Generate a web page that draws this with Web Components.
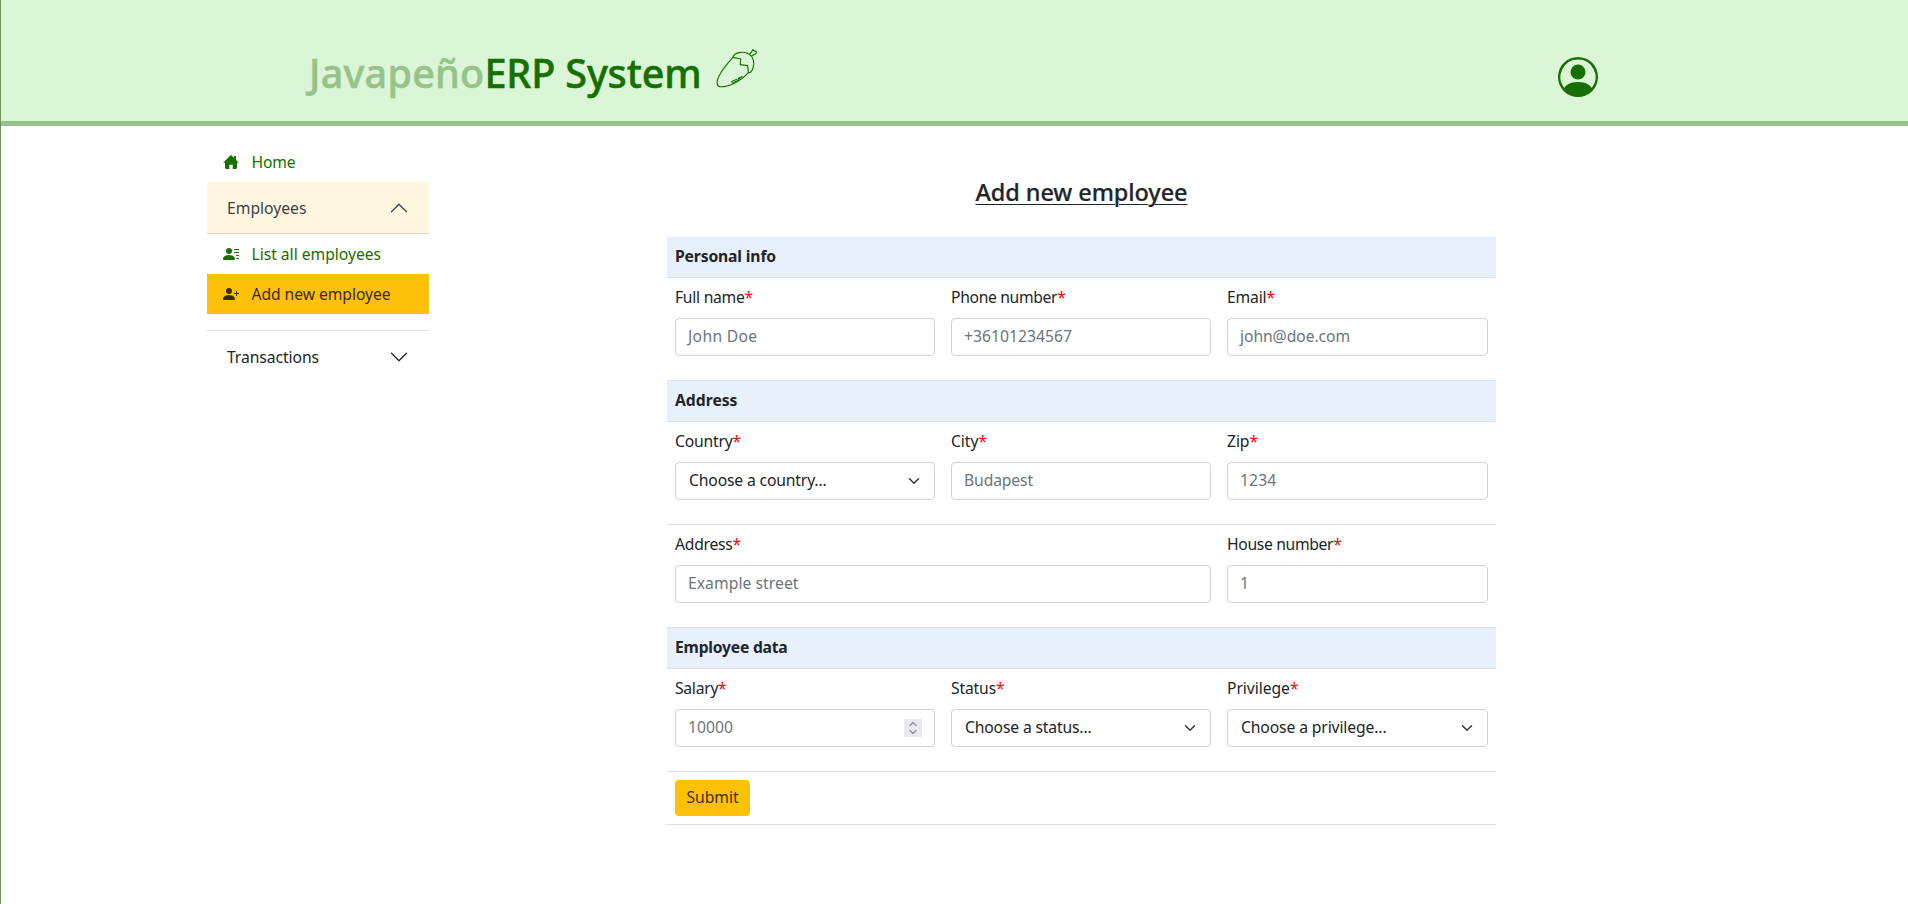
<!DOCTYPE html>
<html lang="en"><head><meta charset="utf-8"><title>Javapeño ERP System</title>
<style>
html,body{margin:0;height:100%}
body{font:15.7px/24px "Noto Sans","Open Sans",sans-serif;color:#212529;background:#fff;overflow:hidden}
</style></head><body>
<erp-app></erp-app>
<script>
const define=(name,html,init)=>customElements.define(name,class extends HTMLElement{
  connectedCallback(){
    if(this.shadowRoot)return;
    const t=document.createElement('template');
    t.innerHTML=typeof html==='function'?html(this):html;
    this.attachShadow({mode:'open'}).append(t.content.cloneNode(true));
    if(init)init(this);
  }
});

/* Inline text tracked to occupy a given advance width */
define('fit-text','<style>:host{display:inline-block;white-space:pre}</style><slot></slot>',el=>{
  const w=parseFloat(el.getAttribute('w'));
  if(!w)return;
  const natural=el.getBoundingClientRect().width;
  el.style.letterSpacing=((w-natural)/el.textContent.length)+'px';
});

const icons={
 home:'<path d="M8.707 1.5a1 1 0 0 0-1.414 0L.646 8.146a.5.5 0 0 0 .708.708L2 8.207V13.5A1.5 1.5 0 0 0 3.5 15h2.8v-4.2h3.4V15h2.8a1.5 1.5 0 0 0 1.5-1.5V8.207l.646.647a.5.5 0 0 0 .708-.708L13 5.793V2.5a.5.5 0 0 0-.5-.5h-1a.5.5 0 0 0-.5.5v1.293L8.707 1.5z"/>',
 list:'<path d="M6 8a3 3 0 1 0 0-6 3 3 0 0 0 0 6m-5 6s-1 0-1-1 1-4 6-4 6 3 6 4-1 1-1 1zM11 3.5a.5.5 0 0 1 .5-.5h4a.5.5 0 0 1 0 1h-4a.5.5 0 0 1-.5-.5m.5 2.5a.5.5 0 0 0 0 1h4a.5.5 0 0 0 0-1zm2 3a.5.5 0 0 0 0 1h2a.5.5 0 0 0 0-1zm0 3a.5.5 0 0 0 0 1h2a.5.5 0 0 0 0-1z"/>',
 add:'<path d="M1 14s-1 0-1-1 1-4 6-4 6 3 6 4-1 1-1 1zm5-6a3 3 0 1 0 0-6 3 3 0 0 0 0 6"/><path fill-rule="evenodd" d="M13.5 5a.5.5 0 0 1 .5.5V7h1.5a.5.5 0 0 1 0 1H14v1.5a.5.5 0 0 1-1 0V8h-1.5a.5.5 0 0 1 0-1H13V5.5a.5.5 0 0 1 .5-.5"/>',
 user:'<path d="M11 6a3 3 0 1 1-6 0 3 3 0 0 1 6 0"/><path fill-rule="evenodd" d="M0 8a8 8 0 1 1 16 0A8 8 0 0 1 0 8m8-7a7 7 0 0 0-5.468 11.37C3.242 11.226 4.805 10 8 10s4.757 1.225 5.468 2.37A7 7 0 0 0 8 1"/>',
 down:'<path fill-rule="evenodd" d="M1.646 4.646a.5.5 0 0 1 .708 0L8 10.293l5.646-5.647a.5.5 0 0 1 .708.708l-6 6a.5.5 0 0 1-.708 0l-6-6a.5.5 0 0 1 0-.708"/>',
 select:'<path fill="none" stroke="#343a40" stroke-linecap="round" stroke-linejoin="round" stroke-width="2" d="m2 5 6 6 6-6"/>'
};
define('erp-icon',el=>{
  const s=el.getAttribute('size')||16;
  return `<style>:host{display:block;width:${s}px;height:${s}px;flex:none}svg{display:block}</style><svg width="${s}" height="${s}" viewBox="0 0 16 16" fill="currentColor">${icons[el.getAttribute('name')]}</svg>`;
});

define('erp-pepper',`<style>:host{display:block}svg{display:block}</style>
<svg width="42" height="40" viewBox="48 24 126 120" fill="none" stroke="#167000" stroke-width="3.4" stroke-linejoin="round" stroke-linecap="round">
<path d="M99 52C87 65 66 88 56 110 50 122 49 139 59 140 82 142 121 126 145 98"/>
<path d="M99 52C101 38 130 32 147 42 161 50 164 69 159 84 156 94 152 99 145 98L143 77 121 74 122 57 99 52"/>
<path d="M148 43 155 36 158 29 170 36 167 41 155 48"/>
<path d="M94 125 110 118M115 115 119 112M97 130 112 122 126 109"/></svg>`);

define('erp-header',`<style>
:host{display:flex;box-sizing:border-box;height:126px;padding:0 310px 0 308px;background:#dbf5d7;border-bottom:5px solid #96c38a;justify-content:space-between;color:#167000}
h1{display:flex;margin:47px 0 0;font-size:39.6px;font-weight:500;line-height:52px;-webkit-text-stroke:.5px}
.light{color:#96c38a}
erp-pepper{margin:1px 0 0 14px}
.user{margin-top:57px}
</style>
<h1><fit-text class="light" w="175.5">Javapeño</fit-text><fit-text w="217">ERP System</fit-text><erp-pepper></erp-pepper></h1>
<erp-icon class="user" name="user" size="40"></erp-icon>`);

define('nav-item',el=>`<style>
:host{display:flex;align-items:center;height:40px;padding:0 16px;gap:12.5px;color:#167000}
:host([active]){background:#ffc107;color:#3b2d08}
</style><erp-icon name="${el.getAttribute('icon')}"></erp-icon><slot></slot>`);

define('nav-group',`<style>
:host{display:block}
.head{display:flex;align-items:center;justify-content:space-between;box-sizing:border-box;height:52px;padding:0 20px}
:host([open]) .head{background:#fff6e0;border-bottom:1px solid #dcd5c6;color:#404348}
:host([open]) erp-icon{transform:rotate(180deg)}
:host([open]){padding-bottom:16px;border-bottom:1px solid #dee2e6}
</style><div class="head"><slot name="title"></slot><erp-icon name="down" size="20"></erp-icon></div><slot></slot>`);

define('erp-sidebar',`<style>:host{display:block;width:222px;padding-top:16px}</style>
<nav>
<nav-item icon="home"><fit-text w="44">Home</fit-text></nav-item>
<nav-group open><fit-text slot="title" w="79.5">Employees</fit-text>
<nav-item icon="list"><fit-text w="129.5">List all employees</fit-text></nav-item>
<nav-item icon="add" active><fit-text w="139">Add new employee</fit-text></nav-item>
</nav-group>
<nav-group><fit-text slot="title" w="92">Transactions</fit-text></nav-group>
</nav>`);

define('form-section',`<style>:host{display:block;box-sizing:border-box;height:41px;padding:8px 8px 0;background:#e8f0fc;border-bottom:1px solid #dee2e6;font-weight:700;line-height:22px}</style><slot></slot>`);
define('form-row',`<style>:host{display:grid;grid-template-columns:276px 276px 277px;border-bottom:1px solid #dee2e6}</style><slot></slot>`);

define('form-field',el=>{
  const a=n=>el.getAttribute(n),kind=a('kind')||'text';
  const tail=kind==='select'?'<erp-icon name="select" size="12"></erp-icon>'
    :kind==='number'?'<svg class="spin" width="18" height="18" viewBox="0 0 18 18" fill="none" stroke="#8f8f9d" stroke-width="1.4" stroke-linecap="round" stroke-linejoin="round"><path fill="#e9e9ed" stroke="none" d="M0 0h18v18H0z"/><path d="m6 6.5 3-3 3 3M6 11.5l3 3 3-3"/></svg>':'';
  return `<style>
:host{display:block;padding:8px 8px 24px;min-width:0}
:host([wide]){grid-column:span 2}
.label{height:24px;margin-bottom:8px;line-height:22px}
.req{color:#f00}
.box{display:flex;align-items:center;justify-content:space-between;box-sizing:border-box;height:38px;border:1px solid #ced4da;border-radius:4px;padding:0 12px;color:#6c757d}
.box.select{color:#212529;padding:0 14px 0 13px}
.box fit-text{padding-bottom:2px}
</style><div class="label"><fit-text w="${a('lw')}">${a('label')}<span class="req">*</span></fit-text></div>
<div class="box ${kind}"><fit-text w="${a('vw')}">${a('value')}</fit-text>${tail}</div>`;
});

define('erp-button','<style>:host{display:block;padding:8px 8px 8px}button{display:block;width:75px;height:36px;padding:0 0 2px;border:0;border-radius:4px;background:#ffc107;color:#40310a;font:inherit;line-height:32px}</style><button type="button"><slot></slot></button>');

define('employee-form',`<style>
:host{display:block;width:829px;padding-top:51px}
h2{margin:0 0 30px;text-align:center;font-size:23.5px;line-height:30px;font-weight:500;-webkit-text-stroke:.2px}
h2 fit-text{text-decoration:underline;text-decoration-thickness:1px;text-underline-offset:3px}
form-row.end{grid-template-columns:1fr}
</style>
<h2><fit-text w="212">Add new employee</fit-text></h2>
<form-section><fit-text w="101">Personal info</fit-text></form-section>
<form-row>
<form-field label="Full name" lw="78" value="John Doe" vw="69.5"></form-field>
<form-field label="Phone number" lw="114.5" value="+36101234567" vw="108"></form-field>
<form-field label="Email" lw="48" value="john@doe.com" vw="110"></form-field>
</form-row>
<form-section><fit-text w="62.5">Address</fit-text></form-section>
<form-row>
<form-field label="Country" lw="66" kind="select" value="Choose a country..." vw="137.5"></form-field>
<form-field label="City" lw="36" value="Budapest" vw="69"></form-field>
<form-field label="Zip" lw="31" value="1234" vw="36.5"></form-field>
</form-row>
<form-row>
<form-field wide label="Address" lw="66" value="Example street" vw="110.5"></form-field>
<form-field label="House number" lw="114.5" value="1" vw="9"></form-field>
</form-row>
<form-section><fit-text w="112.5">Employee data</fit-text></form-section>
<form-row>
<form-field label="Salary" lw="51.5" kind="number" value="10000" vw="45"></form-field>
<form-field label="Status" lw="53.5" kind="select" value="Choose a status..." vw="126.5"></form-field>
<form-field label="Privilege" lw="71.5" kind="select" value="Choose a privilege..." vw="145.5"></form-field>
</form-row>
<form-row class="end"><erp-button><fit-text w="52">Submit</fit-text></erp-button></form-row>`);

define('erp-app',`<style>
:host{display:block;box-sizing:border-box;height:100vh;border-left:1px solid #6f9161}
main{display:flex;padding-left:206px;gap:238px}
</style><erp-header></erp-header><main><erp-sidebar></erp-sidebar><employee-form></employee-form></main>`);
</script></body></html>
